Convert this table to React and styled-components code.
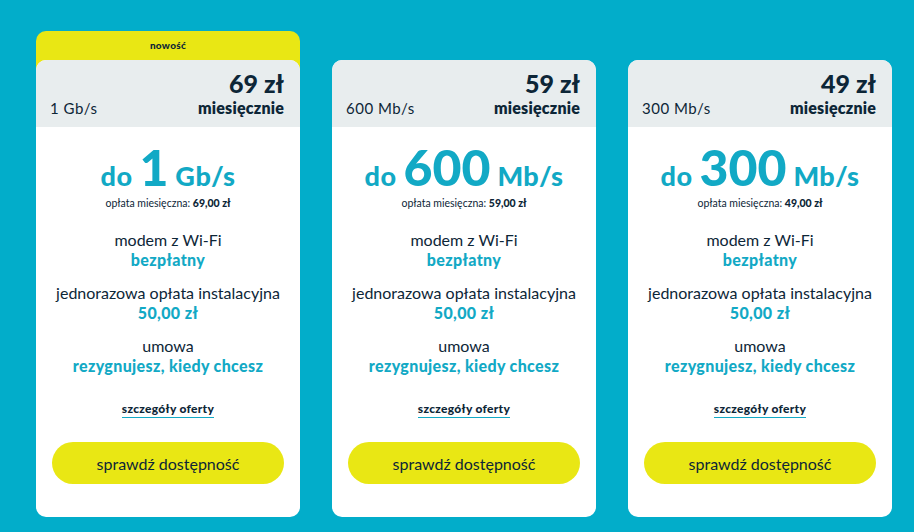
import styled, { createGlobalStyle } from 'styled-components';

const plans = [
  { speed: '1 Gb/s', num: '1', unit: 'Gb/s', price: '69', fee: '69,00 zł', isNew: true },
  { speed: '600 Mb/s', num: '600', unit: 'Mb/s', price: '59', fee: '59,00 zł' },
  { speed: '300 Mb/s', num: '300', unit: 'Mb/s', price: '49', fee: '49,00 zł' },
];

function PlanCard({ plan }) {
  return (
    <Wrapper $featured={plan.isNew}>
      {plan.isNew && <Tab>nowość</Tab>}
      <Card>
        <Header>
          <Speed>{plan.speed}</Speed>
          <PriceBox>
            <Price>{plan.price} zł</Price>
            <Period>miesięcznie</Period>
          </PriceBox>
        </Header>
        <Body>
          <Headline>
            do <Big>{plan.num}</Big> {plan.unit}
          </Headline>
          <Fee>
            opłata miesięczna: <b>{plan.fee}</b>
          </Fee>
          <Features>
            <Feature>
              <Label>modem z Wi-Fi</Label>
              <Value>bezpłatny</Value>
            </Feature>
            <Feature>
              <Label>jednorazowa opłata instalacyjna</Label>
              <Value>50,00 zł</Value>
            </Feature>
            <Feature>
              <Label>umowa</Label>
              <Value>rezygnujesz, kiedy chcesz</Value>
            </Feature>
          </Features>
          <Details href='#oferta'>szczegóły oferty</Details>
          <Button>sprawdź dostępność</Button>
        </Body>
      </Card>
    </Wrapper>
  );
}

function App() {
  return (
    <>
      <GlobalStyle />
      <Page>
        {plans.map((p) => (
          <PlanCard key={p.speed} plan={p} />
        ))}
      </Page>
    </>
  );
}

export default App;

const GlobalStyle = createGlobalStyle`
  html, body {
    margin: 0;
    background: #02adca;
  }
  body {
    font-family: Lato, 'Open Sans', sans-serif;
    color: #0d2637;
  }
`;

const Page = styled.div`
  height: 532px;
  box-sizing: border-box;
  padding: 0 0 15px 36px;
  display: flex;
  align-items: flex-end;
  gap: 32px;
`;

const Wrapper = styled.div`
  width: 264px;
  border-radius: 10px 10px 0 0;
  background: ${(p) =>
    p.$featured ? 'linear-gradient(#e9e714 40px, transparent 40px)' : 'transparent'};
`;

const Tab = styled.div`
  height: 29px;
  display: flex;
  align-items: center;
  justify-content: center;
  font-size: 10px;
  font-weight: 900;
  letter-spacing: 0.3px;
  padding-bottom: 2px;
  box-sizing: border-box;
`;

const Card = styled.div`
  background: #ffffff;
  border-radius: 10px;
  overflow: hidden;
`;

const Header = styled.div`
  background: #e8edee;
  height: 67px;
  box-sizing: border-box;
  padding: 10px 16px 0 14px;
  display: flex;
  justify-content: space-between;
  align-items: flex-start;
`;

const Speed = styled.div`
  font-size: 15px;
  letter-spacing: 0.5px;
  margin-top: 29px;
`;

const PriceBox = styled.div`
  text-align: right;
`;

const Price = styled.div`
  font-size: 25px;
  font-weight: 900;
  line-height: 26px;
`;

const Period = styled.div`
  font-size: 16px;
  font-weight: 800;
  line-height: 20px;
  margin-top: 2px;
  letter-spacing: 0.2px;
`;

const Body = styled.div`
  padding: 12px 16px 33px;
  display: flex;
  flex-direction: column;
  align-items: center;
  text-align: center;
`;

const Headline = styled.div`
  color: #12a9c5;
  font-size: 27px;
  font-weight: 900;
  line-height: 56px;
  height: 56px;
  letter-spacing: 0.5px;
`;

const Big = styled.span`
  font-size: 50px;
  letter-spacing: 0;
`;

const Fee = styled.div`
  font-size: 10.5px;
  line-height: 14px;
  margin-top: 1px;

  b {
    font-weight: 900;
  }
`;

const Features = styled.div`
  margin-top: 20px;
  display: flex;
  flex-direction: column;
  gap: 13px;
`;

const Feature = styled.div`
  display: flex;
  flex-direction: column;
`;

const Label = styled.div`
  font-size: 16px;
  line-height: 20px;
`;

const Value = styled.div`
  color: #12a9c5;
  font-size: 16px;
  font-weight: 900;
  line-height: 20px;
  letter-spacing: 0.35px;
`;

const Details = styled.a`
  margin-top: 26px;
  font-size: 12px;
  line-height: 14px;
  font-weight: 900;
  letter-spacing: 0.3px;
  color: #0d2637;
  text-decoration: none;
  border-bottom: 1px solid #12a9c5;
  padding-bottom: 1px;
`;

const Button = styled.button`
  margin-top: 24px;
  width: 232px;
  height: 42px;
  border: none;
  border-radius: 21px;
  background: #e9e714;
  color: #0d2637;
  font-family: Lato, 'Open Sans', sans-serif;
  font-size: 16px;
  cursor: pointer;
`;
